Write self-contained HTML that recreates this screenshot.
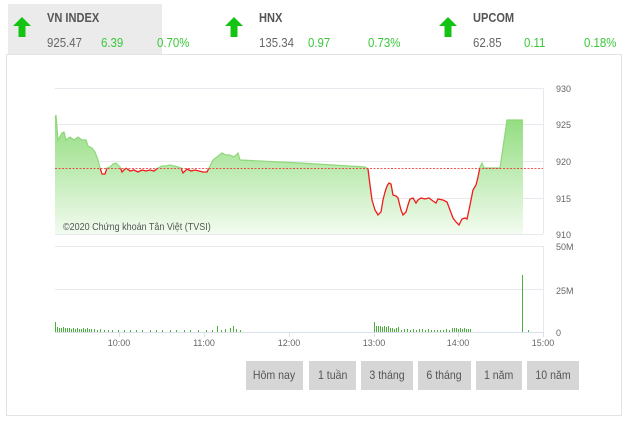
<!DOCTYPE html>
<html><head><meta charset="utf-8"><style>
body{margin:0;width:627px;height:421px;background:#fff;font-family:"Liberation Sans",sans-serif;position:relative;overflow:hidden}
.hd{position:absolute;top:4px;height:50px;width:154px}
.t{position:absolute;top:10px;font-size:13px;font-weight:bold;color:#555;transform:scaleX(.85);transform-origin:left}
.v{position:absolute;top:35px;font-size:13px;color:#666;transform:scaleX(.88);transform-origin:left}
.g{color:#3ac73a}
.ar{position:absolute;top:15px}
.panel{position:absolute;left:6px;top:54px;width:614px;height:360px;border:1px solid #e3e3e3}
.btn{position:absolute;top:361px;height:29px;background:#d6d6d6;color:#555;font-size:12px;line-height:29px;text-align:center}
.btn span{display:inline-block;transform:scaleX(.88)}
</style></head><body>
<div class="panel"></div>
<div class="hd" style="left:8px;background:#ebebeb"></div>
<svg class="ar" style="left:10px" width="24" height="24" viewBox="0 0 24 24"><path d="M12 2 L21 11 H15.5 V22 H8.5 V11 H3 Z" fill="#14c414"/></svg>
<svg class="ar" style="left:222px" width="24" height="24" viewBox="0 0 24 24"><path d="M12 2 L21 11 H15.5 V22 H8.5 V11 H3 Z" fill="#14c414"/></svg>
<svg class="ar" style="left:436px" width="24" height="24" viewBox="0 0 24 24"><path d="M12 2 L21 11 H15.5 V22 H8.5 V11 H3 Z" fill="#14c414"/></svg>
<div class="t" style="left:47px">VN INDEX</div><div class="v" style="left:47px">925.47</div><div class="v g" style="left:101px">6.39</div><div class="v g" style="left:157px">0.70%</div>
<div class="t" style="left:259px">HNX</div><div class="v" style="left:259px">135.34</div><div class="v g" style="left:308px">0.97</div><div class="v g" style="left:368px">0.73%</div>
<div class="t" style="left:473px">UPCOM</div><div class="v" style="left:473px">62.85</div><div class="v g" style="left:524px">0.11</div><div class="v g" style="left:584px">0.18%</div>

<svg style="position:absolute;left:0;top:0" width="627" height="421">
<defs>
<linearGradient id="gf" x1="0" y1="0" x2="0" y2="1"><stop offset="0" stop-color="#8fdc7c"/><stop offset="1" stop-color="#f2fbef"/></linearGradient>
<clipPath id="ab"><rect x="50" y="80" width="500" height="88.5"/></clipPath>
<clipPath id="be"><rect x="50" y="168.5" width="500" height="80"/></clipPath>
</defs>
<g stroke="#e6e9ee" stroke-width="1" fill="none">
<path d="M55 88.5H543M55 124.5H543M55 161.5H543M55 198.5H543M55 234.5H543"/>
<path d="M543.5 88V234M543.5 246V332"/>
<path d="M55 246.5H543M55 289.5H543"/>
</g>
<path d="M55 332.5H543" stroke="#d8e0ec"/>
<g stroke="#d8e0ec"><path d="M119.5 332V337M204.5 332V337M289.5 332V337M374.5 332V337M458.5 332V337M543.5 332V337"/></g>
<path id="ln" d="M55 118 L56 115 L58 140 L62 133 L64 132 L66 140 L70 137 L74 140 L78 137 L82 140 L86 140 L88 146 L92 148 L95 152 L98 160 L100 168 L102 174 L105 174 L107 168 L110 167 L113 164 L116 163 L118 165 L120 167 L122 172 L126 168 L130 171 L134 170 L138 172 L142 170 L146 171 L150 170 L154 171 L158 168 L162 166 L166 166 L170 165 L174 166 L178 167 L181 168 L183 173 L187 169 L191 171 L195 170 L199 171 L203 172 L207 172 L210 166 L213 160 L217 157 L222 153 L226 155 L230 155 L234 157 L238 153 L240 160 L300 163 L365 167 L368 169 L370 185 L372 200 L375 210 L378 215 L381 212 L383 200 L385 192 L387 186 L389 183 L391 184 L393 195 L396 196 L398 198 L401 210 L403 215 L406 212 L408 205 L410 199 L413 198 L416 203 L418 200 L421 198 L425 199 L429 198 L433 201 L436 203 L438 199 L443 200 L447 202 L450 210 L453 218 L456 222 L459 225 L462 219 L465 218 L467 219 L469 210 L471 200 L473 190 L476 185 L478 177 L480 167 L482 163 L484 168 L500 168 L507 120 L523 120" fill="none"/>
<path d="M55 118 L56 115 L58 140 L62 133 L64 132 L66 140 L70 137 L74 140 L78 137 L82 140 L86 140 L88 146 L92 148 L95 152 L98 160 L100 168 L102 174 L105 174 L107 168 L110 167 L113 164 L116 163 L118 165 L120 167 L122 172 L126 168 L130 171 L134 170 L138 172 L142 170 L146 171 L150 170 L154 171 L158 168 L162 166 L166 166 L170 165 L174 166 L178 167 L181 168 L183 173 L187 169 L191 171 L195 170 L199 171 L203 172 L207 172 L210 166 L213 160 L217 157 L222 153 L226 155 L230 155 L234 157 L238 153 L240 160 L300 163 L365 167 L368 169 L370 185 L372 200 L375 210 L378 215 L381 212 L383 200 L385 192 L387 186 L389 183 L391 184 L393 195 L396 196 L398 198 L401 210 L403 215 L406 212 L408 205 L410 199 L413 198 L416 203 L418 200 L421 198 L425 199 L429 198 L433 201 L436 203 L438 199 L443 200 L447 202 L450 210 L453 218 L456 222 L459 225 L462 219 L465 218 L467 219 L469 210 L471 200 L473 190 L476 185 L478 177 L480 167 L482 163 L484 168 L500 168 L507 120 L523 120 L523 234 L55 234Z" fill="url(#gf)"/>
<use href="#ln" stroke="#8fd87a" stroke-width="1.2" clip-path="url(#ab)"/>
<use href="#ln" stroke="#f01c1c" stroke-width="1.3" clip-path="url(#be)"/>
<path d="M55 168.5H543" stroke="#f02020" stroke-width="0.8" stroke-dasharray="2,1.5"/>
<text x="63" y="230" font-size="10" fill="#555" font-family="Liberation Sans" transform="translate(63 0) scale(0.9 1) translate(-63 0)">©2020 Chứng khoán Tân Việt (TVSI)</text>
<g stroke="#4cae3c" stroke-width="1">
<path d="M55.5 332V322M57.5 332V327M59.5 332V328M61.5 332V328M63.5 332V327M65.5 332V328M67.5 332V328M69.5 332V328M71.5 332V329M73.5 332V328M75.5 332V329M77.5 332V328M79.5 332V329M81.5 332V329M83.5 332V328M85.5 332V329M87.5 332V328M89.5 332V329M91.5 332V329M94.5 332V329M97.5 332V330M100.5 332V329M104.5 332V330M108.5 332V330M112.5 332V330M118.5 332V330M124.5 332V330M130.5 332V330M136.5 332V330M142.5 332V330M150.5 332V330M156.5 332V330M162.5 332V330M170.5 332V330M176.5 332V330M184.5 332V330M190.5 332V330M198.5 332V330M206.5 332V330M212.5 332V330M217.5 332V326M221.5 332V330M225.5 332V329M230.5 332V328M233.5 332V326M236.5 332V329M240.5 332V330"/>
<path d="M374.5 332V322M376.5 332V326M378.5 332V326M380.5 332V326M382.5 332V327M384.5 332V326M386.5 332V327M388.5 332V326M390.5 332V328M392.5 332V328M394.5 332V329M396.5 332V328M398.5 332V327M401.5 332V330M404.5 332V329M407.5 332V329M410.5 332V330M413.5 332V329M416.5 332V330M419.5 332V329M422.5 332V329M425.5 332V330M428.5 332V329M431.5 332V330M434.5 332V330M437.5 332V330M440.5 332V330M443.5 332V330M446.5 332V329M449.5 332V330M452.5 332V328M454.5 332V328M456.5 332V328M458.5 332V329M460.5 332V328M462.5 332V329M464.5 332V328M466.5 332V329M468.5 332V329M470.5 332V329"/>
<path d="M522.5 332V275M528.5 332V330"/>
</g>
<g font-size="9" fill="#666" font-family="Liberation Sans">
<text x="556" y="92">930</text><text x="556" y="128">925</text><text x="556" y="165">920</text><text x="556" y="202">915</text><text x="556" y="238">910</text>
<text x="556" y="250">50M</text><text x="556" y="294">25M</text><text x="556" y="336">0</text>
<g text-anchor="middle"><text x="119" y="346">10:00</text><text x="204" y="346">11:00</text><text x="289" y="346">12:00</text><text x="374" y="346">13:00</text><text x="458" y="346">14:00</text><text x="543" y="346">15:00</text></g>
</g>
</svg>
<div class="btn" style="left:246px;width:57px"><span>Hôm nay</span></div>
<div class="btn" style="left:309px;width:47px"><span>1 tuần</span></div>
<div class="btn" style="left:361px;width:52px"><span>3 tháng</span></div>
<div class="btn" style="left:418px;width:53px"><span>6 tháng</span></div>
<div class="btn" style="left:476px;width:46px"><span>1 năm</span></div>
<div class="btn" style="left:527px;width:52px"><span>10 năm</span></div>
</body></html>
